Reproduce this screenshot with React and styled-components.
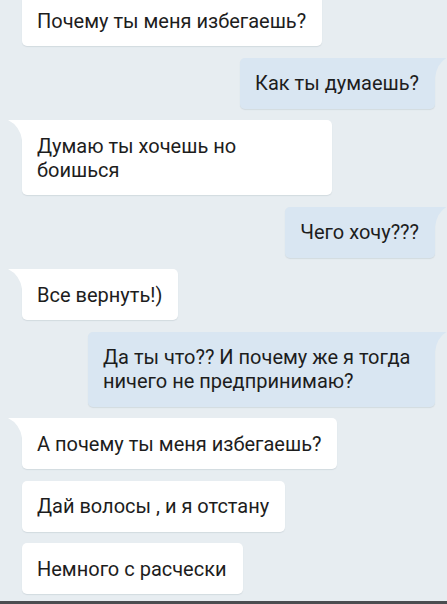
import React from "react";
import styled, { createGlobalStyle, css } from "styled-components";

const Global = createGlobalStyle`
  html, body { margin: 0; padding: 0; }
  body { background: #e7edf1; font-family: Roboto, "Noto Sans", Arial, sans-serif; }
`;

const Screen = styled.div`
  width: 447px;
  height: 604px;
  box-sizing: border-box;
  overflow: hidden;
  background: #e7edf1;
  border-bottom: 3px solid #4b4d50;
`;

const Thread = styled.div`
  display: flex;
  flex-direction: column;
  gap: 11.5px;
  margin-top: -5px;
  padding: 0 12px 0 22px;
`;

const Bubble = styled.div`
  position: relative;
  box-sizing: border-box;
  max-width: 347px;
  padding: 13.5px 16px 13.5px 15px;
  border-radius: 5px;
  font-size: 20px;
  line-height: 24px;
  color: #1d1d1d;
  box-shadow: 0 1px 1px rgba(60, 80, 100, 0.12);
  ${(p) =>
    p.$out
      ? css`
          align-self: flex-end;
          background: #d9e6f2;
        `
      : css`
          align-self: flex-start;
          background: #ffffff;
        `}
  ${(p) =>
    p.$tail &&
    (p.$out
      ? css`
          border-top-right-radius: 0;
          &::before {
            content: "";
            position: absolute;
            top: 0;
            right: -12px;
            width: 12px;
            height: 20px;
            background: #d9e6f2;
            clip-path: path("M12 0 H0 V20 Q2 6 12 0 Z");
          }
        `
      : css`
          border-top-left-radius: 0;
          &::before {
            content: "";
            position: absolute;
            top: 0;
            left: -14px;
            width: 14px;
            height: 20px;
            background: #ffffff;
            clip-path: path("M0 0 H14 V20 Q12 6 0 0 Z");
          }
        `)}
`;

const messages = [
  { out: false, tail: false, text: "Почему ты меня избегаешь?" },
  { out: true, tail: true, text: "Как ты думаешь?" },
  { out: false, tail: true, w: 310, text: "Думаю ты хочешь но боишься" },
  { out: true, tail: true, text: "Чего хочу???" },
  { out: false, tail: true, text: "Все вернуть!)" },
  { out: true, tail: true, w: 347, text: "Да ты что?? И почему же я тогда ничего не предпринимаю?" },
  { out: false, tail: true, text: "А почему ты меня избегаешь?" },
  { out: false, tail: false, text: "Дай волосы , и я отстану" },
  { out: false, tail: false, text: "Немного с расчески" },
];

export default function App() {
  return (
    <>
      <Global />
      <Screen>
        <Thread>
          {messages.map((m, i) => (
            <Bubble
              key={i}
              $out={m.out}
              $tail={m.tail}
              style={m.w ? { width: m.w } : undefined}
            >
              {m.text}
            </Bubble>
          ))}
        </Thread>
      </Screen>
    </>
  );
}
